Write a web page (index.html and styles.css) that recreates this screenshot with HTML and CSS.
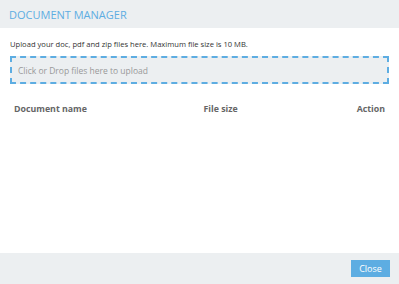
FILE: index.html
```html
<!DOCTYPE html>
<html lang="en">
<head>
    <title>Document Manager</title>
    <link rel="stylesheet" href="styles.css">
</head>
<body>
<div class="modal">
    <div class="modal-header">
        <h1 class="modal-title">DOCUMENT MANAGER</h1>
    </div>
    <div class="modal-body">
        <p class="upload-note">Upload your doc, pdf and zip files here. Maximum file size is 10 MB.</p>
        <div class="dropzone">Click or Drop files here to upload</div>
        <table class="doc-table">
            <thead>
                <tr>
                    <th class="col-name">Document name</th>
                    <th class="col-size">File size</th>
                    <th class="col-action">Action</th>
                </tr>
            </thead>
            <tbody></tbody>
        </table>
    </div>
    <div class="modal-footer">
        <button class="close-button">Close</button>
    </div>
</div>
</body>
</html>
```

FILE: styles.css
```css
body {
    margin: 0;
    font-family: 'Open Sans', sans-serif;
    background-color: #fff;
}

.modal {
    width: 399px;
    height: 284px;
    display: flex;
    flex-direction: column;
}

.modal-header {
    height: 28px;
    background-color: #eceff1;
    display: flex;
    align-items: center;
    padding: 0 9px;
}

.modal-title {
    margin: 0;
    font-size: 11px;
    font-weight: 400;
    color: #5dade2;
}

.modal-body {
    flex: 1;
    padding: 11px 10px 0;
}

.upload-note {
    margin: 0 0 7px;
    font-size: 7.6px;
    color: #333;
}

.dropzone {
    height: 24px;
    border: 2px dashed #5dade2;
    background-color: #eceff1;
    color: #999;
    font-size: 8.5px;
    display: flex;
    align-items: center;
    padding-left: 6px;
}

.doc-table {
    width: 100%;
    border-collapse: collapse;
    margin-top: 15px;
}

.doc-table th {
    font-size: 8.8px;
    font-weight: 700;
    color: #666;
    padding: 4px 4px;
}

.col-name {
    text-align: left;
    width: 50%;
}

.col-size {
    text-align: left;
}

.col-action {
    text-align: right;
    padding-right: 8px;
}

.modal-footer {
    height: 31px;
    background-color: #eceff1;
    display: flex;
    align-items: center;
    justify-content: flex-end;
    padding: 0 9px;
}

.close-button {
    background-color: #5dade2;
    color: #fff;
    border: none;
    font-family: 'Open Sans', sans-serif;
    font-size: 9px;
    width: 39px;
    height: 17px;
    padding: 0;
}
```
